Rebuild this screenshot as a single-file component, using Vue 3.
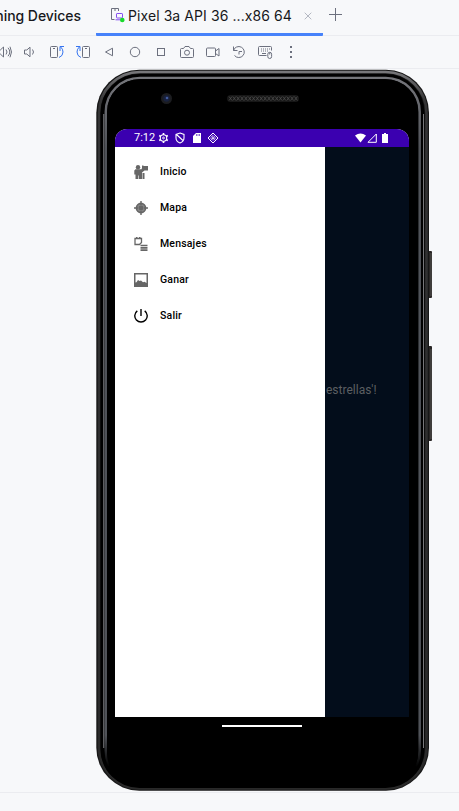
<script setup>
const menu = [
  { label: 'Inicio', icon: 'home' },
  { label: 'Mapa', icon: 'map' },
  { label: 'Mensajes', icon: 'messages' },
  { label: 'Ganar', icon: 'picture' },
  { label: 'Salir', icon: 'power' },
]
const holes = Array.from({ length: 18 }, (_, i) => i)
</script>

<template>
  <div class="window">
    <header class="tabs">
      <div class="heading"><span>ning Devices</span></div>
      <div class="tab">
        <svg class="device" width="16" height="16" viewBox="0 0 16 16" fill="none">
          <path d="M9.500 4V1.500h-7v11h3" stroke="#6c707e" />
          <path d="M5 3h2" stroke="#6c707e" />
          <rect x="7.500" y="6.500" width="6" height="4.500" rx=".6" stroke="#834df0" />
          <path d="M6.500 12.800h5" stroke="#834df0" />
          <circle cx="13.300" cy="13" r="2.300" fill="#19d92b" />
        </svg>
        <span class="title">Pixel 3a API 36 ...x86 64</span>
        <svg class="close" width="8" height="8" viewBox="0 0 8 8"><path d="M.7.7l6.600 6.600M7.300.7L.7 7.300" stroke="#b4b8c2" /></svg>
      </div>
      <svg class="plus" width="14" height="14" viewBox="0 0 14 14"><path d="M7.500 1v13M1 7.500h13" stroke="#6c707e" /></svg>
    </header>

    <div class="toolbar">
      <svg viewBox="0 0 16 16"><path d="M1 6v4h2.300l3.200 3V3L3.300 6zM9 5.500q2 2.500 0 5M11 3.800q3.600 4.200 0 8.400M13 2.700q3 5.300 0 10.600" /></svg>
      <svg viewBox="0 0 16 16"><path d="M1.500 6v4h2.300l3.200 2.800V3.200L3.800 6zM9.500 5.500q2 2.500 0 5" /></svg>
      <svg viewBox="0 0 16 16"><rect x="1.500" y="2.500" width="7" height="11" rx="1" /><path d="M4 4.500h2" /><path class="blue" d="M10 13.500q4-1.500 4-5.500 0-3-2.500-5.200M11 7V2.500h4" /></svg>
      <svg viewBox="0 0 16 16"><rect x="7.500" y="2.500" width="7" height="11" rx="1" /><path d="M10 4.500h2" /><path class="blue" d="M6 13.500Q2 12 2 8q0-3 2.500-5.200M5 7V2.500H1" /></svg>
      <svg viewBox="0 0 16 16"><path d="M11.500 4.200v7.600L4.500 8z" /></svg>
      <svg viewBox="0 0 16 16"><circle cx="8" cy="8" r="4.700" /></svg>
      <svg viewBox="0 0 16 16"><rect x="4.500" y="4.500" width="7" height="7" /></svg>
      <svg viewBox="0 0 16 16"><path d="M2.500 4.500h2l1.500-2h4l1.500 2h2q1 0 1 1v7q0 1-1 1h-11q-1 0-1-1v-7q0-1 1-1z" /><circle cx="8" cy="8.700" r="2.500" /></svg>
      <svg viewBox="0 0 16 16"><rect x="1.500" y="4" width="9" height="8.500" rx="1" /><path d="M10.500 7l3.500-2.500v7.500l-3.500-2.500" /></svg>
      <svg viewBox="0 0 16 16"><path d="M2.500 6.500a5.500 5.500 0 1 1 1 5M2.500 2.500v4h4M8 10.500v-3h3" /></svg>
      <svg viewBox="0 0 16 16"><path d="M9.500 11.500h-7q-1 0-1-1v-7q0-1 1-1h11q1 0 1 1v3M5 9.500h4" /><path stroke-dasharray="1 1" d="M4 5h9M4 7h7" /><rect x="10.800" y="8.300" width="3.800" height="6.200" rx="1.900" /><path d="M12.700 8.500v2" /></svg>
      <svg class="more" viewBox="0 0 16 16"><path d="M7 2h2v2H7zM7 7h2v2H7zM7 12h2v2H7z" /></svg>
    </div>

    <main class="stage">
      <div class="phone">
        <svg class="shell" width="338" height="724" viewBox="0 0 338 724" fill="none">
          <defs>
            <linearGradient id="edge" x1="0" y1="0" x2="1" y2="0">
              <stop offset="0" stop-color="#29292b" /><stop offset=".12" stop-color="#77787a" /><stop offset=".35" stop-color="#b4b4b7" /><stop offset=".7" stop-color="#a2a2a5" /><stop offset="1" stop-color="#29292b" />
            </linearGradient>
            <linearGradient id="fade" x1="0" y1="0" x2="0" y2="1">
              <stop offset="0" stop-color="#75767b" /><stop offset=".1" stop-color="#505359" /><stop offset=".93" stop-color="#505359" /><stop offset=".975" stop-color="#000" />
            </linearGradient>
            <linearGradient id="rim" x1="0" y1="0" x2="0" y2="1">
              <stop offset="0" stop-color="#77777a" /><stop offset=".04" stop-color="#343435" /><stop offset="1" stop-color="#292929" />
            </linearGradient>
          </defs>
          <rect x="331" y="181" width="5" height="47" rx="1" fill="#292625" />
          <rect x="331" y="276" width="5" height="95" rx="1" fill="#292625" />
          <path d="M335 183v43M335 279v90" stroke="#575553" />
          <rect x="0.300" y="-.3" width="332.700" height="721" rx="43" fill="#161616" />
          <rect x="3" y="2" width="327.500" height="716.500" rx="41" stroke="url(#rim)" stroke-width="2.500" />
          <path d="M42 1.700H290" stroke="url(#edge)" stroke-width="2.600" />
          <rect x="5.500" y="5" width="322" height="712" rx="38" fill="#000" stroke="#000" stroke-width="2" />
          <path d="M7.800 44V678" stroke="#85868a" />
          <path d="M327.500 44V678" stroke="#77777a" />
          <rect x="9.800" y="8" width="313.900" height="706.500" rx="34" stroke="url(#fade)" stroke-width="2.500" />
          <rect x="11" y="9" width="311" height="707" rx="33" fill="#000" />
          <circle cx="70.500" cy="28.500" r="5.500" fill="#1c1d20" />
          <circle cx="70.500" cy="28.500" r="3.200" fill="#18213d" />
          <circle cx="71" cy="28" r="1.300" fill="#425a9c" />
          <rect x="131" y="25" width="72" height="7" rx="3.500" fill="#171717" />
          <path v-for="i in holes" :key="i" :d="`M${133 + i * 3.850} 26.500l3 4m0-4l-3 4`" stroke="#4c4c4c" stroke-width=".8" />
        </svg>

        <div class="screen">
          <div class="status">
            <span class="clock">7:12</span>
            <svg class="gear" width="11" height="12" viewBox="0 0 12 12" fill="none" stroke="#fff"><circle cx="6" cy="6" r="3.500" stroke-width="1.200" /><path stroke-width="1.800" d="M6 .6v2M6 9.400v2M1.300 3.300l1.800 1M8.900 7.700l1.800 1M10.700 3.300l-1.800 1M3.100 7.700l-1.800 1" /><circle cx="6" cy="6" r="1" /></svg>
            <svg class="shield" width="10" height="12" viewBox="0 0 10 12" fill="none" stroke="#fff"><path stroke-width="1.100" d="M5 1l4 1.500V6q0 3.500-4 5-4-1.500-4-5V2.500zM1.500 2.500l7 6.500" /></svg>
            <svg class="sd" width="8" height="10" viewBox="0 0 8 10"><path fill="#fff" d="M3 0h5v10H0V3z" /><path stroke="#3b00b0" stroke-width=".6" d="M3.500 1v2M5 1v2M6.500 1v2" /></svg>
            <svg class="diamond" width="12" height="12" viewBox="0 0 12 12" fill="none" stroke="#fff"><path d="M6 1l5 5-5 5-5-5z" /><path stroke-dasharray="1.200 .7" d="M6 3.500L8.500 6 6 8.500 3.500 6zM3.500 3.500l5 5M8.500 3.500l-5 5" /></svg>
            <span class="space"></span>
            <svg width="11" height="10" viewBox="0 0 11 10"><path fill="#fff" d="M0 2.600Q5.500-1.800 11 2.600L5.500 9.500z" /></svg>
            <svg class="signal" width="10" height="10" viewBox="0 0 10 10"><path fill="none" stroke="#fff" d="M9.300 1v8.300H1z" /></svg>
            <svg class="battery" width="6" height="10" viewBox="0 0 6 10"><path fill="#fff" d="M2 0h2v1h2v9H0V1h2z" /></svg>
          </div>
          <div class="app">
            <nav class="drawer">
              <div v-for="item in menu" :key="item.icon" class="item">
                <svg width="14" height="14" viewBox="0 0 14 14" fill="#666">
                  <g v-if="item.icon === 'home'"><circle cx="4" cy="2.200" r="2.200" /><path d="M1.500 4.200h6l.5-1.200V.5h1.500V1H14v4.500h-3.500L8 7.500V14H4.800v-3.500h-.6V14H1.500V9.500H.3V5.500z" /><path d="M8.500 8h2v6h-2z" /></g>
                  <g v-else-if="item.icon === 'map'"><circle cx="7" cy="7" r="4.600" fill="#858585" stroke="#666" stroke-width="1.600" /><circle cx="7" cy="7" r="2.400" /><path d="M6.300 0h1.400v4H6.300zM6.300 10h1.400v4H6.300zM0 6.300h4v1.400H0zM10 6.300h4v1.400h-4z" /></g>
                  <g v-else-if="item.icon === 'messages'"><path fill="none" stroke="#666" stroke-width="1.300" d="M1 1.500h6.500v4L5.500 7.500H1z" /><path d="M2 0h1.500v2H2zM5 0h1.500v2H5zM6.500 7.800h7v1.500h-7zM6.500 10h7v1.700h-7zM6.500 12.300h7V14h-7z" /></g>
                  <path v-else-if="item.icon === 'picture'" fill-rule="evenodd" d="M0 0h14v14H0zM1.500 1.500v8l1-.3L4 7l1.500 1L7 7.500l2 1.700 1.500-.5 2 1.300V1.500z" />
                  <path v-else fill="none" stroke="#000" stroke-width="1.400" d="M7 0v7M3.300 1.900A6.200 6.200 0 1 0 10.700 1.900" />
                </svg>
                <span>{{ item.label }}</span>
              </div>
            </nav>
            <div class="behind">estrellas'!</div>
          </div>
        </div>
        <div class="handle"></div>
      </div>
    </main>
  </div>
</template>

<style>
body { margin: 0; overflow: hidden; background: #f7f8fa; }
</style>

<style scoped>
* { box-sizing: border-box; }
.window { width: 459px; height: 811px; overflow: hidden; background: #f7f8fa; display: flex; flex-direction: column; font-family: Inter, sans-serif; color: #17181c; }
svg { flex: none; display: block; }
.tabs { height: 36px; border-bottom: 1px solid #ebecf0; display: flex; flex: none; }
.heading { width: 96px; height: 31px; display: flex; align-items: center; justify-content: flex-end; padding-right: 15px; white-space: nowrap; font-size: 14px; font-weight: 500; letter-spacing: -.05px; }
.tab { width: 227px; height: 36px; border-bottom: 3px solid #4682fa; border-radius: 1px; padding: 0 11px 3px 13px; display: flex; align-items: center; font-size: 14px; white-space: nowrap; }
.title { width: 165px; margin-left: 3px; letter-spacing: .08px; }
.close { margin: 1px 0 0 11px; }
.plus { margin: 7px 0 0 5px; }
.toolbar { height: 33px; flex: none; border-bottom: 1px solid #ebecf0; display: flex; align-items: center; gap: 10px; margin-left: -3px; }
.toolbar svg { width: 16px; height: 16px; fill: none; stroke: #6c707e; stroke-width: 1; }
.toolbar .blue { stroke: #3574f0; }
.toolbar .more { fill: #6c707e; stroke: none; }
.stage { height: 724px; flex: none; border-bottom: 1px solid #ebecf0; padding: 1px 0 0 96px; }
.phone { position: relative; width: 333px; height: 721px; padding: 59px 0 0 19px; }
.shell { position: absolute; left: 0; top: 0; overflow: visible; }
.screen { position: relative; width: 294px; height: 588px; overflow: hidden; border-radius: 12px 12px 0 0; background: #fff; font-family: Roboto, sans-serif; }
.status { height: 18px; background: #3b00b0; color: #fff; display: flex; align-items: center; padding: 0 21px 0 19px; }
.clock { width: 21px; font-size: 11px; line-height: 18px; white-space: nowrap; }
.gear { margin-left: 3px; }
.shield { margin-left: 6px; }
.sd { margin-left: 8px; }
.diamond { margin-left: 6px; }
.space { flex: 1; }
.signal { margin-left: 1px; }
.battery { margin-left: 5px; }
.app { display: flex; height: 570px; background: #030d1b; }
.drawer { width: 210px; padding-top: 6px; background: #fff; }
.item { height: 36px; display: flex; align-items: center; gap: 12px; padding: 1px 0 0 19px; color: #000; font-size: 10.5px; font-weight: 500; letter-spacing: .18px; }
.behind { padding: 235px 0 0 1px; color: #5c5f62; font-size: 12px; line-height: 16px; }
.handle { position: relative; width: 80px; height: 2px; margin: 8px 0 0 107px; background: #fff; }
</style>
